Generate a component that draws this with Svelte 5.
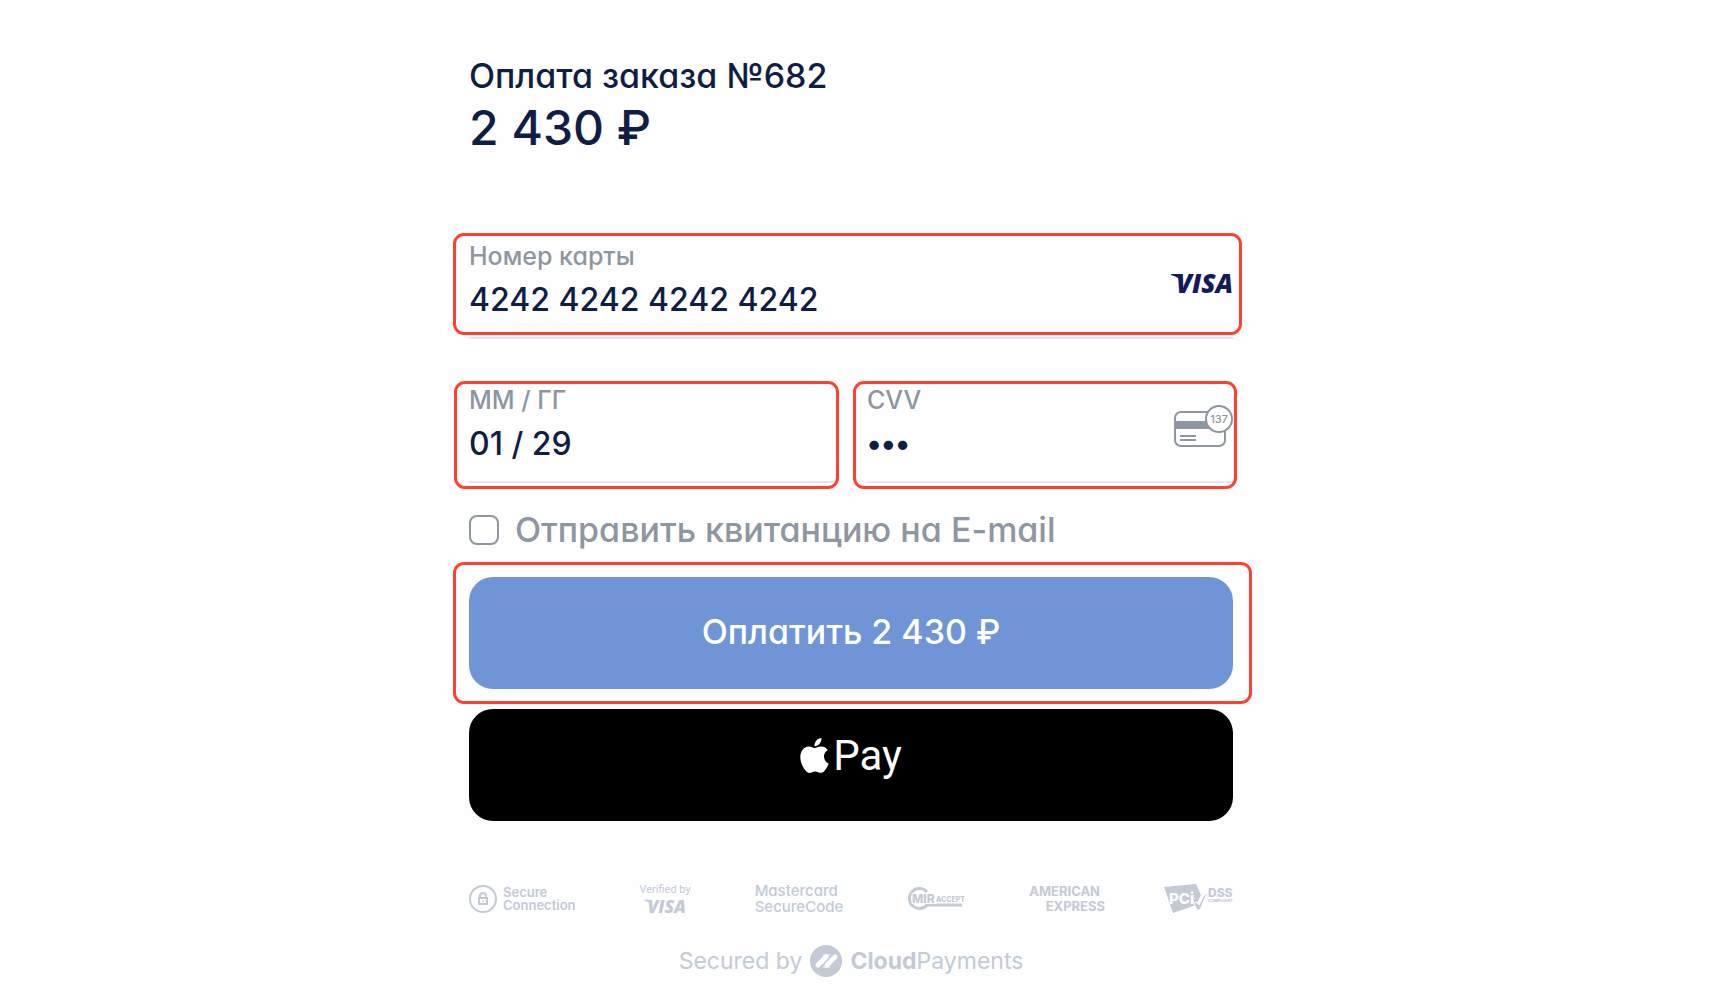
<script lang="ts">
	let card = $state('4242 4242 4242 4242');
	let expiry = $state('01 / 29');
	let cvv = $state('137');
	let receipt = $state(false);

	const order = 682;
	const amount = '2 430 ₽';
</script>

<main class="checkout">
	<header>
		<h1>Оплата заказа №{order}</h1>
		<p class="price">{amount}</p>
	</header>

	<form onsubmit={(e) => e.preventDefault()}>
		<div class="field marked card">
			<label for="card">Номер карты</label>
			<input id="card" type="text" inputmode="numeric" bind:value={card} />
			<svg class="visa" viewBox="0 0 62 22" width="62" height="22" role="img" aria-label="Visa">
				<path d="M0 1H10L12 10Q8 4 0 2Z" />
				<text x="5" y="20">VISA</text>
			</svg>
		</div>

		<div class="pair">
			<div class="field marked expiry">
				<label for="expiry">ММ / ГГ</label>
				<input id="expiry" type="text" bind:value={expiry} />
			</div>
			<div class="field marked cvv">
				<label for="cvv">CVV</label>
				<input id="cvv" type="password" bind:value={cvv} />
				<svg class="hint" viewBox="0 0 60 44" width="60" height="44" aria-hidden="true">
					<rect x="2" y="8" width="50" height="34" rx="6" fill="#fff" stroke="#8e96a1" stroke-width="2" />
					<path d="M2 17H52V25H2Z" fill="#8e96a1" />
					<path d="M7 32H23M7 36H23" stroke="#8e96a1" stroke-width="2" />
					<circle cx="46" cy="15" r="13" fill="#fff" stroke="#8e96a1" stroke-width="2" />
					<text x="46" y="19" text-anchor="middle">137</text>
				</svg>
			</div>
		</div>

		<label class="receipt">
			<input type="checkbox" bind:checked={receipt} />
			<span>Отправить квитанцию на E-mail</span>
		</label>

		<div class="marked submit">
			<button class="pay" type="submit">Оплатить {amount}</button>
		</div>
		<button class="pay apple" type="button">
			<svg viewBox="2 0 20 24" width="29" height="35" fill="#fff" aria-hidden="true">
				<path
					d="M12.152 6.896c-.948 0-2.415-1.078-3.96-1.04-2.04.027-3.91 1.183-4.961 3.014-2.117 3.675-.546 9.103 1.519 12.09 1.013 1.454 2.208 3.09 3.792 3.039 1.52-.065 2.09-.987 3.935-.987 1.831 0 2.35.987 3.96.948 1.637-.026 2.676-1.48 3.676-2.948 1.156-1.688 1.636-3.325 1.662-3.415-.039-.013-3.182-1.221-3.22-4.857-.026-3.04 2.48-4.494 2.597-4.559-1.429-2.09-3.623-2.324-4.39-2.376-2-.156-3.675 1.09-4.61 1.09zM15.53 3.83c.843-1.012 1.4-2.427 1.245-3.83-1.207.052-2.662.805-3.532 1.818-.78.896-1.454 2.338-1.273 3.714 1.338.104 2.715-.688 3.559-1.701"
				/>
			</svg>
			<span>Pay</span>
		</button>
	</form>

	<footer>
		<div class="badges">
			<div class="secure">
				<svg viewBox="0 0 28 28" width="28" height="28" fill="none" stroke="currentColor" aria-hidden="true">
					<circle cx="14" cy="14" r="13" stroke-width="2" />
					<path d="M10 13H18V19H10ZM11 13V11a3 3 0 0 1 6 0V13" stroke-width="2" />
					<path d="M14 15V17" stroke-width="1" />
				</svg>
				<span>Secure<br />Connection</span>
			</div>

			<div class="verified">
				<span>Verified by</span>
				<svg class="visa" viewBox="0 0 62 22" width="42" height="15" role="img" aria-label="Visa">
					<path d="M0 1H10L12 10Q8 4 0 2Z" />
					<text x="5" y="20">VISA</text>
				</svg>
			</div>

			<div class="mastercard">Mastercard<br />SecureCode</div>

			<svg class="mir" viewBox="0 0 58 26" width="58" height="26" role="img" aria-label="MIR Accept">
				<path d="M20 6A10 10 0 1 0 20 19H55" fill="none" stroke="currentColor" stroke-width="3" />
				<text class="mir-name" x="5" y="17">MIR</text>
				<text class="mir-accept" x="29" y="16">ACCEPT</text>
			</svg>

			<div class="amex"><span>AMERICAN</span><span>EXPRESS</span></div>

			<svg class="pci" viewBox="0 0 69 30" width="69" height="30" role="img" aria-label="PCI DSS Compliant">
				<path d="M0 3 32 0 37 11 32 21 9 29Z" />
				<text class="pci-name" x="5" y="20">PCi</text>
				<path d="M30 20 32 18 35 21Q38 12 45 7Q39 16 36 26H33Z" stroke="#fefefe" />
				<text class="pci-dss" x="44" y="13">DSS</text>
				<text class="pci-note" x="44" y="18">COMPLIANT</text>
			</svg>
		</div>

		<div class="secured">
			<span>Secured by</span>
			<svg viewBox="0 0 32 32" width="32" height="32" aria-hidden="true">
				<circle cx="16" cy="16" r="16" fill="currentColor" />
				<path d="M8 20 16 12M17 20 25 12" stroke="#fff" stroke-width="5" stroke-linecap="round" />
				<path d="M13 10H20M13 22H20" stroke="#fff" stroke-width="1" />
			</svg>
			<span><b>Cloud</b>Payments</span>
		</div>
	</footer>
</main>

<style>
	:global(body) {
		background: #fefefe;
	}

	.checkout {
		box-sizing: border-box;
		max-width: 810px;
		margin: 0 auto;
		padding: 56px 30px 28px 16px;
		font-family: Inter, 'Noto Sans', sans-serif;
		font-feature-settings: 'cv11';
		font-weight: 500;
		color: #101e46;
	}

	header {
		display: flex;
		flex-direction: column;
		gap: 4px;
		margin-bottom: 84px;
	}
	h1 {
		margin: 0;
		font-size: 34px;
		line-height: 40px;
		font-weight: 500;
	}
	.price {
		margin: 0;
		font-size: 48px;
		line-height: 56px;
	}

	/* ---------- fields ---------- */
	.field {
		position: relative;
		display: flex;
		flex-direction: column;
		gap: 7px;
		padding-bottom: 18px;
		border-bottom: 2px solid #e3e7ef;
	}
	.field label {
		font-size: 25px;
		line-height: 32px;
		color: #8e96a1;
	}
	.field input {
		width: 100%;
		height: 40px;
		padding: 0;
		border: 0;
		outline: 0;
		background: none;
		font: inherit;
		font-feature-settings: inherit;
		font-size: 32px;
		color: inherit;
	}
	.field input[type='password'] {
		font-size: 30px;
		font-weight: 700;
	}
	.pair {
		display: grid;
		grid-template-columns: 1fr 1fr;
		gap: 32px;
		margin-top: 45px;
	}
	.visa {
		overflow: visible;
		fill: currentColor;
		font: italic 800 26px 'Open Sans', sans-serif;
	}
	.card .visa {
		position: absolute;
		top: 33px;
		right: 0;
		color: #15195a;
	}
	.hint {
		position: absolute;
		top: 20px;
		right: 0;
	}
	.hint text {
		font-size: 11px;
		fill: #8e96a1;
	}

	/* ---------- red outlines ---------- */
	.marked {
		position: relative;
	}
	.marked::after {
		content: '';
		position: absolute;
		inset: -7px -9px 2px -16px;
		border: 3px solid #ff3f30;
		border-radius: 11px;
		pointer-events: none;
	}
	.expiry::after {
		inset: -3px -4px -8px -15px;
	}
	.cvv::after {
		inset: -3px -4px -8px -14px;
	}
	.submit::after {
		inset: -15px -19px -15px -16px;
	}

	.receipt {
		display: flex;
		align-items: center;
		gap: 16px;
		margin: 27px 0;
		font-size: 34px;
		line-height: 40px;
		color: #8e96a1;
	}
	.receipt input {
		appearance: none;
		box-sizing: border-box;
		width: 30px;
		height: 30px;
		margin: 0;
		border: 2px solid #8e96a1;
		border-radius: 8px;
		background: #fff;
	}
	.receipt input:checked {
		background: #6f95d7;
	}

	/* ---------- buttons ---------- */
	.pay {
		display: flex;
		align-items: center;
		justify-content: center;
		box-sizing: border-box;
		width: 100%;
		height: 112px;
		padding: 0 0 4px;
		border: 0;
		border-radius: 24px;
		background: #6f95d7;
		color: #fff;
		font: inherit;
		font-feature-settings: inherit;
		font-size: 34px;
		cursor: pointer;
	}
	.pay.apple {
		gap: 4px;
		margin-top: 20px;
		padding-bottom: 20px;
		background: #000;
		font-family: Roboto, sans-serif;
		font-size: 42px;
		font-weight: 400;
	}

	/* ---------- trust badges ---------- */
	footer {
		color: #c3cad6;
	}
	.badges {
		display: flex;
		align-items: center;
		justify-content: space-between;
		height: 30px;
		margin-top: 63px;
	}
	.secure {
		display: flex;
		align-items: center;
		gap: 6px;
		font-size: 13px;
		line-height: 13px;
		font-weight: 600;
	}
	.verified {
		display: flex;
		flex-direction: column;
		align-items: center;
		gap: 3px;
		font: 11px/12px Roboto, sans-serif;
	}
	.mastercard {
		font-size: 15px;
		line-height: 16px;
	}
	.mir text,
	.pci text {
		fill: currentColor;
		font-weight: 800;
	}
	.mir .mir-name {
		font-size: 12px;
		stroke: #fefefe;
		stroke-width: 2px;
		paint-order: stroke;
	}
	.mir .mir-accept {
		font-size: 7px;
	}
	.amex {
		display: flex;
		flex-direction: column;
		font: 700 13px/15px Inter, sans-serif;
	}
	.amex span + span {
		align-self: flex-end;
		margin-right: -5px;
	}
	.pci {
		fill: currentColor;
	}
	.pci .pci-name {
		fill: #fefefe;
		font-size: 15px;
	}
	.pci .pci-dss {
		font-size: 12px;
	}
	.pci .pci-note {
		font-size: 4px;
	}

	.secured {
		display: flex;
		align-items: center;
		justify-content: center;
		gap: 8px;
		margin-top: 31px;
		font-size: 23px;
		line-height: 32px;
		font-weight: 400;
		font-feature-settings: normal;
	}
	.secured b {
		font-weight: 700;
	}
</style>
